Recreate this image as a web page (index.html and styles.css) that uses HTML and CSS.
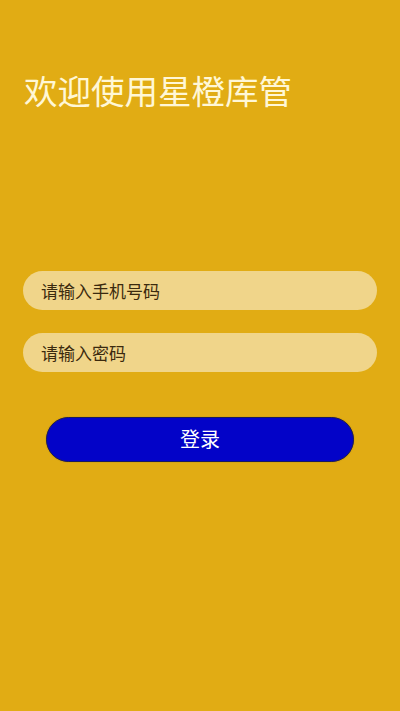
FILE: index.html
```html
<!DOCTYPE html>
<html lang="zh-CN">
<head>
<meta charset="utf-8">
<meta name="viewport" content="width=device-width, initial-scale=1">
<title>欢迎使用星橙库管</title>
<link rel="stylesheet" href="styles.css">
</head>
<body>
<main class="page">
  <h1 class="title">欢迎使用星橙库管</h1>
  <form class="form">
    <div class="field"><input class="input" type="text" placeholder="请输入手机号码"></div>
    <div class="field"><input class="input" type="password" placeholder="请输入密码"></div>
    <button class="btn" type="button">登录</button>
  </form>
</main>
</body>
</html>
```
FILE: styles.css
```css
* { box-sizing: border-box; }
html, body {
  margin: 0;
  padding: 0;
  background: #e1ac14;
  height: 100%;
}
body {
  font-family: "Noto Sans CJK SC", "Noto Sans", sans-serif;
}
.page {
  padding: 0 23px;
  display: flex;
  flex-direction: column;
}
.title {
  margin: 70px 0 0 1px;
  font-size: 33.5px;
  line-height: 40px;
  font-weight: 400;
  color: #fff7d6;
}
.form {
  margin-top: 161px;
  display: flex;
  flex-direction: column;
  gap: 23px;
}
.field { display: flex; }
.input {
  width: 100%;
  height: 39px;
  border: none;
  outline: none;
  border-radius: 20px;
  background: #f0d58a;
  padding: 0 18px;
  font-family: inherit;
  font-size: 17px;
  color: #3b2a0e;
}
.input::placeholder { color: #3b2a0e; opacity: 1; }
.btn {
  margin: 22px 23px 0 23px;
  height: 45px;
  border-radius: 23px;
  background: #0303c8;
  border: 1px solid #1a1a5c;
  box-shadow: 0 0 1px rgba(60, 40, 0, 0.5);
  color: #ffffff;
  font-family: inherit;
  font-size: 20px;
  line-height: 1;
  padding: 0 0 2px 0;
}
```
